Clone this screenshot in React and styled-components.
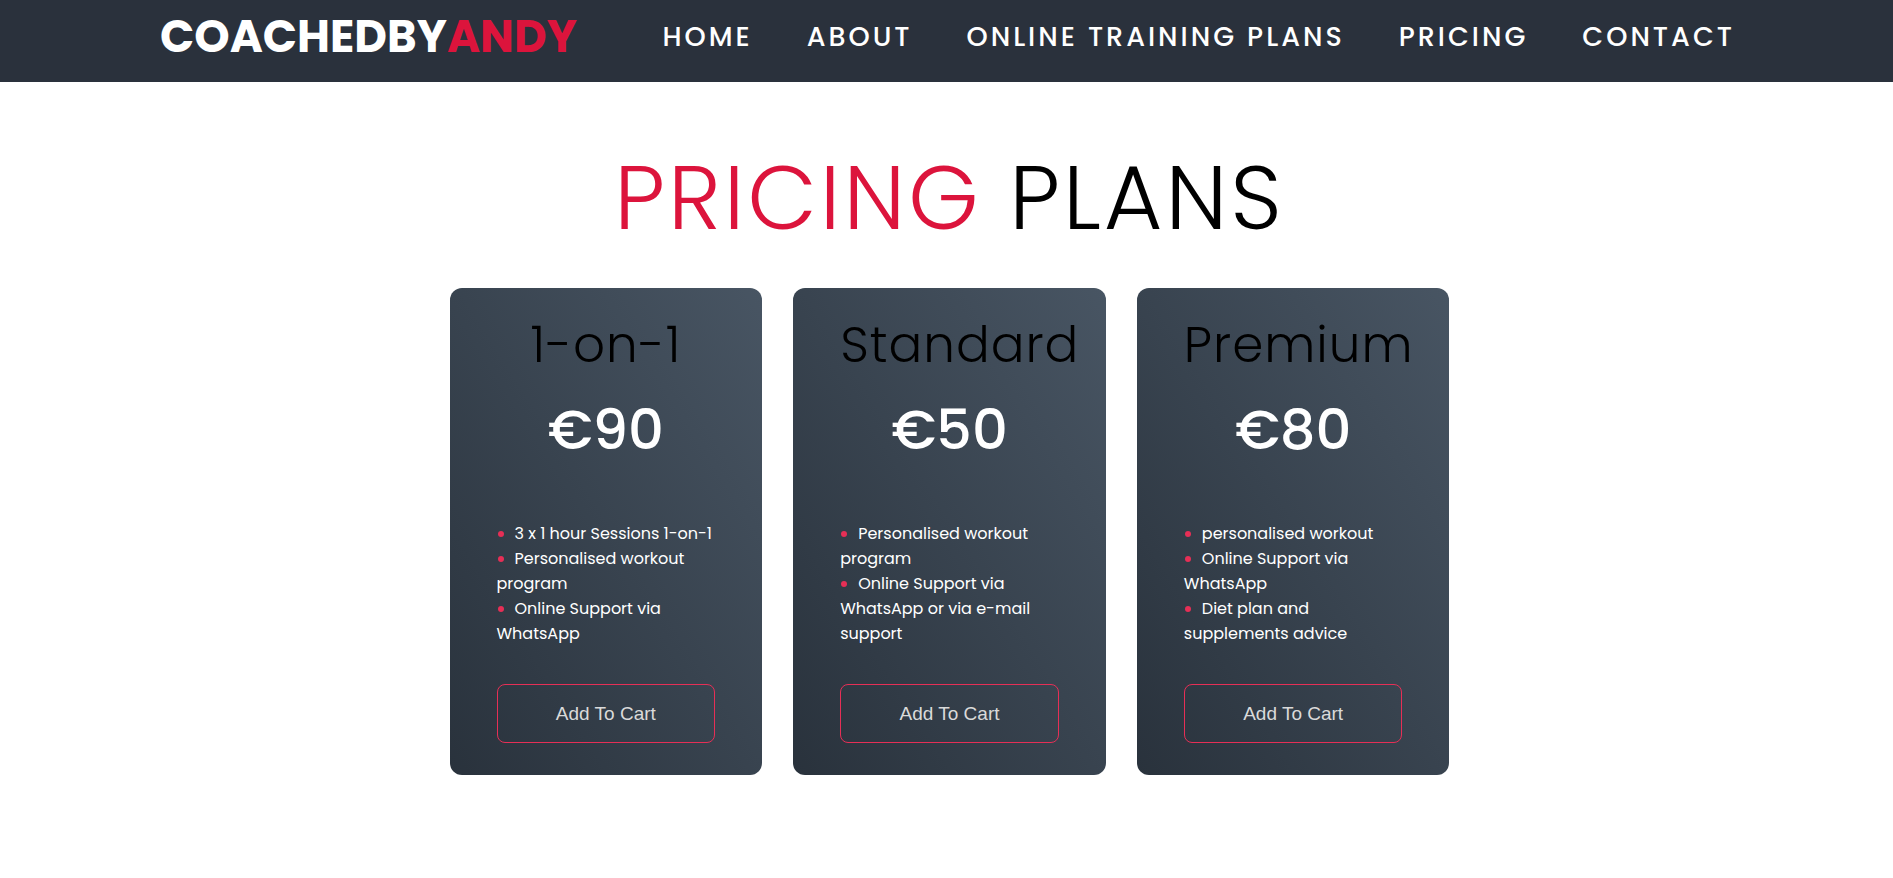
import React from "react";
import styled, { createGlobalStyle } from "styled-components";

const GlobalStyle = createGlobalStyle`
  *, *::before, *::after { box-sizing: border-box; }
  body {
    margin: 0;
    background: #fff;
    color: #000;
    font-family: Poppins, Inter, "Open Sans", sans-serif;
  }
`;

const Header = styled.header`
  display: flex;
  align-items: center;
  justify-content: space-between;
  min-height: 82px;
  padding: 2px 158px 10px 160px;
  background: #2a313c;
`;

const Logo = styled.a`
  color: #fff;
  font-size: 45px;
  font-weight: 700;
  line-height: 70px;
  text-decoration: none;
`;

const Accent = styled.span`
  color: #dc143c;
`;

const NavList = styled.ul`
  display: flex;
  gap: 54px;
  margin: 0;
  padding: 0;
  list-style: none;
`;

const NavLink = styled.a`
  color: #fff;
  font-size: 27px;
  font-weight: 500;
  line-height: 40px;
  letter-spacing: 3px;
  text-decoration: none;
  text-transform: uppercase;
  white-space: nowrap;
`;

const Main = styled.main`
  display: flex;
  flex-direction: column;
  align-items: center;
  padding: 56px 0 56px 6px;
`;

const PageTitle = styled.h1`
  margin: 0;
  font-size: 90px;
  font-weight: 300;
  line-height: 120px;
  letter-spacing: 3px;
  text-transform: uppercase;
`;

const Plans = styled.section`
  display: grid;
  grid-template-columns: repeat(3, minmax(0, 1fr));
  gap: 31px;
  width: 100%;
  max-width: 1000px;
  margin-top: 30px;
`;

const Card = styled.article`
  display: flex;
  flex-direction: column;
  padding: 25px 47px 32px;
  border-radius: 12px;
  background: linear-gradient(to top right, #29323c, #485563);
  color: #fff;
`;

const PlanName = styled.h2`
  margin: 0;
  color: #000;
  font-size: 50px;
  font-weight: 300;
  line-height: 64px;
  letter-spacing: 1px;
  text-align: center;
`;

const Price = styled.p`
  margin: 19px 0 0;
  font-size: 56px;
  font-weight: 500;
  line-height: 68px;
  text-align: center;
`;

const Features = styled.ul`
  margin: 57px 0 0;
  padding: 0;
  font-size: 16px;
  line-height: 25px;
  list-style: none;
`;

const Feature = styled.li`
  &::before {
    content: "";
    display: inline-block;
    width: 6px;
    height: 6px;
    margin: 0 11px 2px 1px;
    border-radius: 50%;
    background: #e62f56;
    vertical-align: middle;
  }
`;

const CartButton = styled.button`
  height: 59px;
  margin-top: 38px;
  border: 1px solid #e62f56;
  border-radius: 8px;
  background: transparent;
  color: #dadada;
  font-family: Arial, "Liberation Sans", sans-serif;
  font-size: 19px;
  cursor: pointer;
`;

const links = ["Home", "About", "Online Training Plans", "Pricing", "Contact"];

const plans = [
  {
    name: "1-on-1",
    price: "€90",
    features: ["3 x 1 hour Sessions 1-on-1", "Personalised workout program", "Online Support via WhatsApp"],
  },
  {
    name: "Standard",
    price: "€50",
    features: ["Personalised workout program", "Online Support via WhatsApp or via e-mail support"],
  },
  {
    name: "Premium",
    price: "€80",
    features: ["personalised workout", "Online Support via WhatsApp", "Diet plan and supplements advice"],
  },
];

export default function App() {
  return (
    <>
      <GlobalStyle />
      <Header>
        <Logo href="#home">
          COACHEDBY<Accent>ANDY</Accent>
        </Logo>
        <nav>
          <NavList>
            {links.map((label) => (
              <li key={label}>
                <NavLink href={`#${label.toLowerCase().replaceAll(" ", "-")}`}>{label}</NavLink>
              </li>
            ))}
          </NavList>
        </nav>
      </Header>
      <Main>
        <PageTitle>
          <Accent>Pricing</Accent> Plans
        </PageTitle>
        <Plans>
          {plans.map((plan) => (
            <Card key={plan.name}>
              <PlanName>{plan.name}</PlanName>
              <Price>{plan.price}</Price>
              <Features>
                {plan.features.map((feature) => (
                  <Feature key={feature}>{feature}</Feature>
                ))}
              </Features>
              <CartButton type="button">Add To Cart</CartButton>
            </Card>
          ))}
        </Plans>
      </Main>
    </>
  );
}
